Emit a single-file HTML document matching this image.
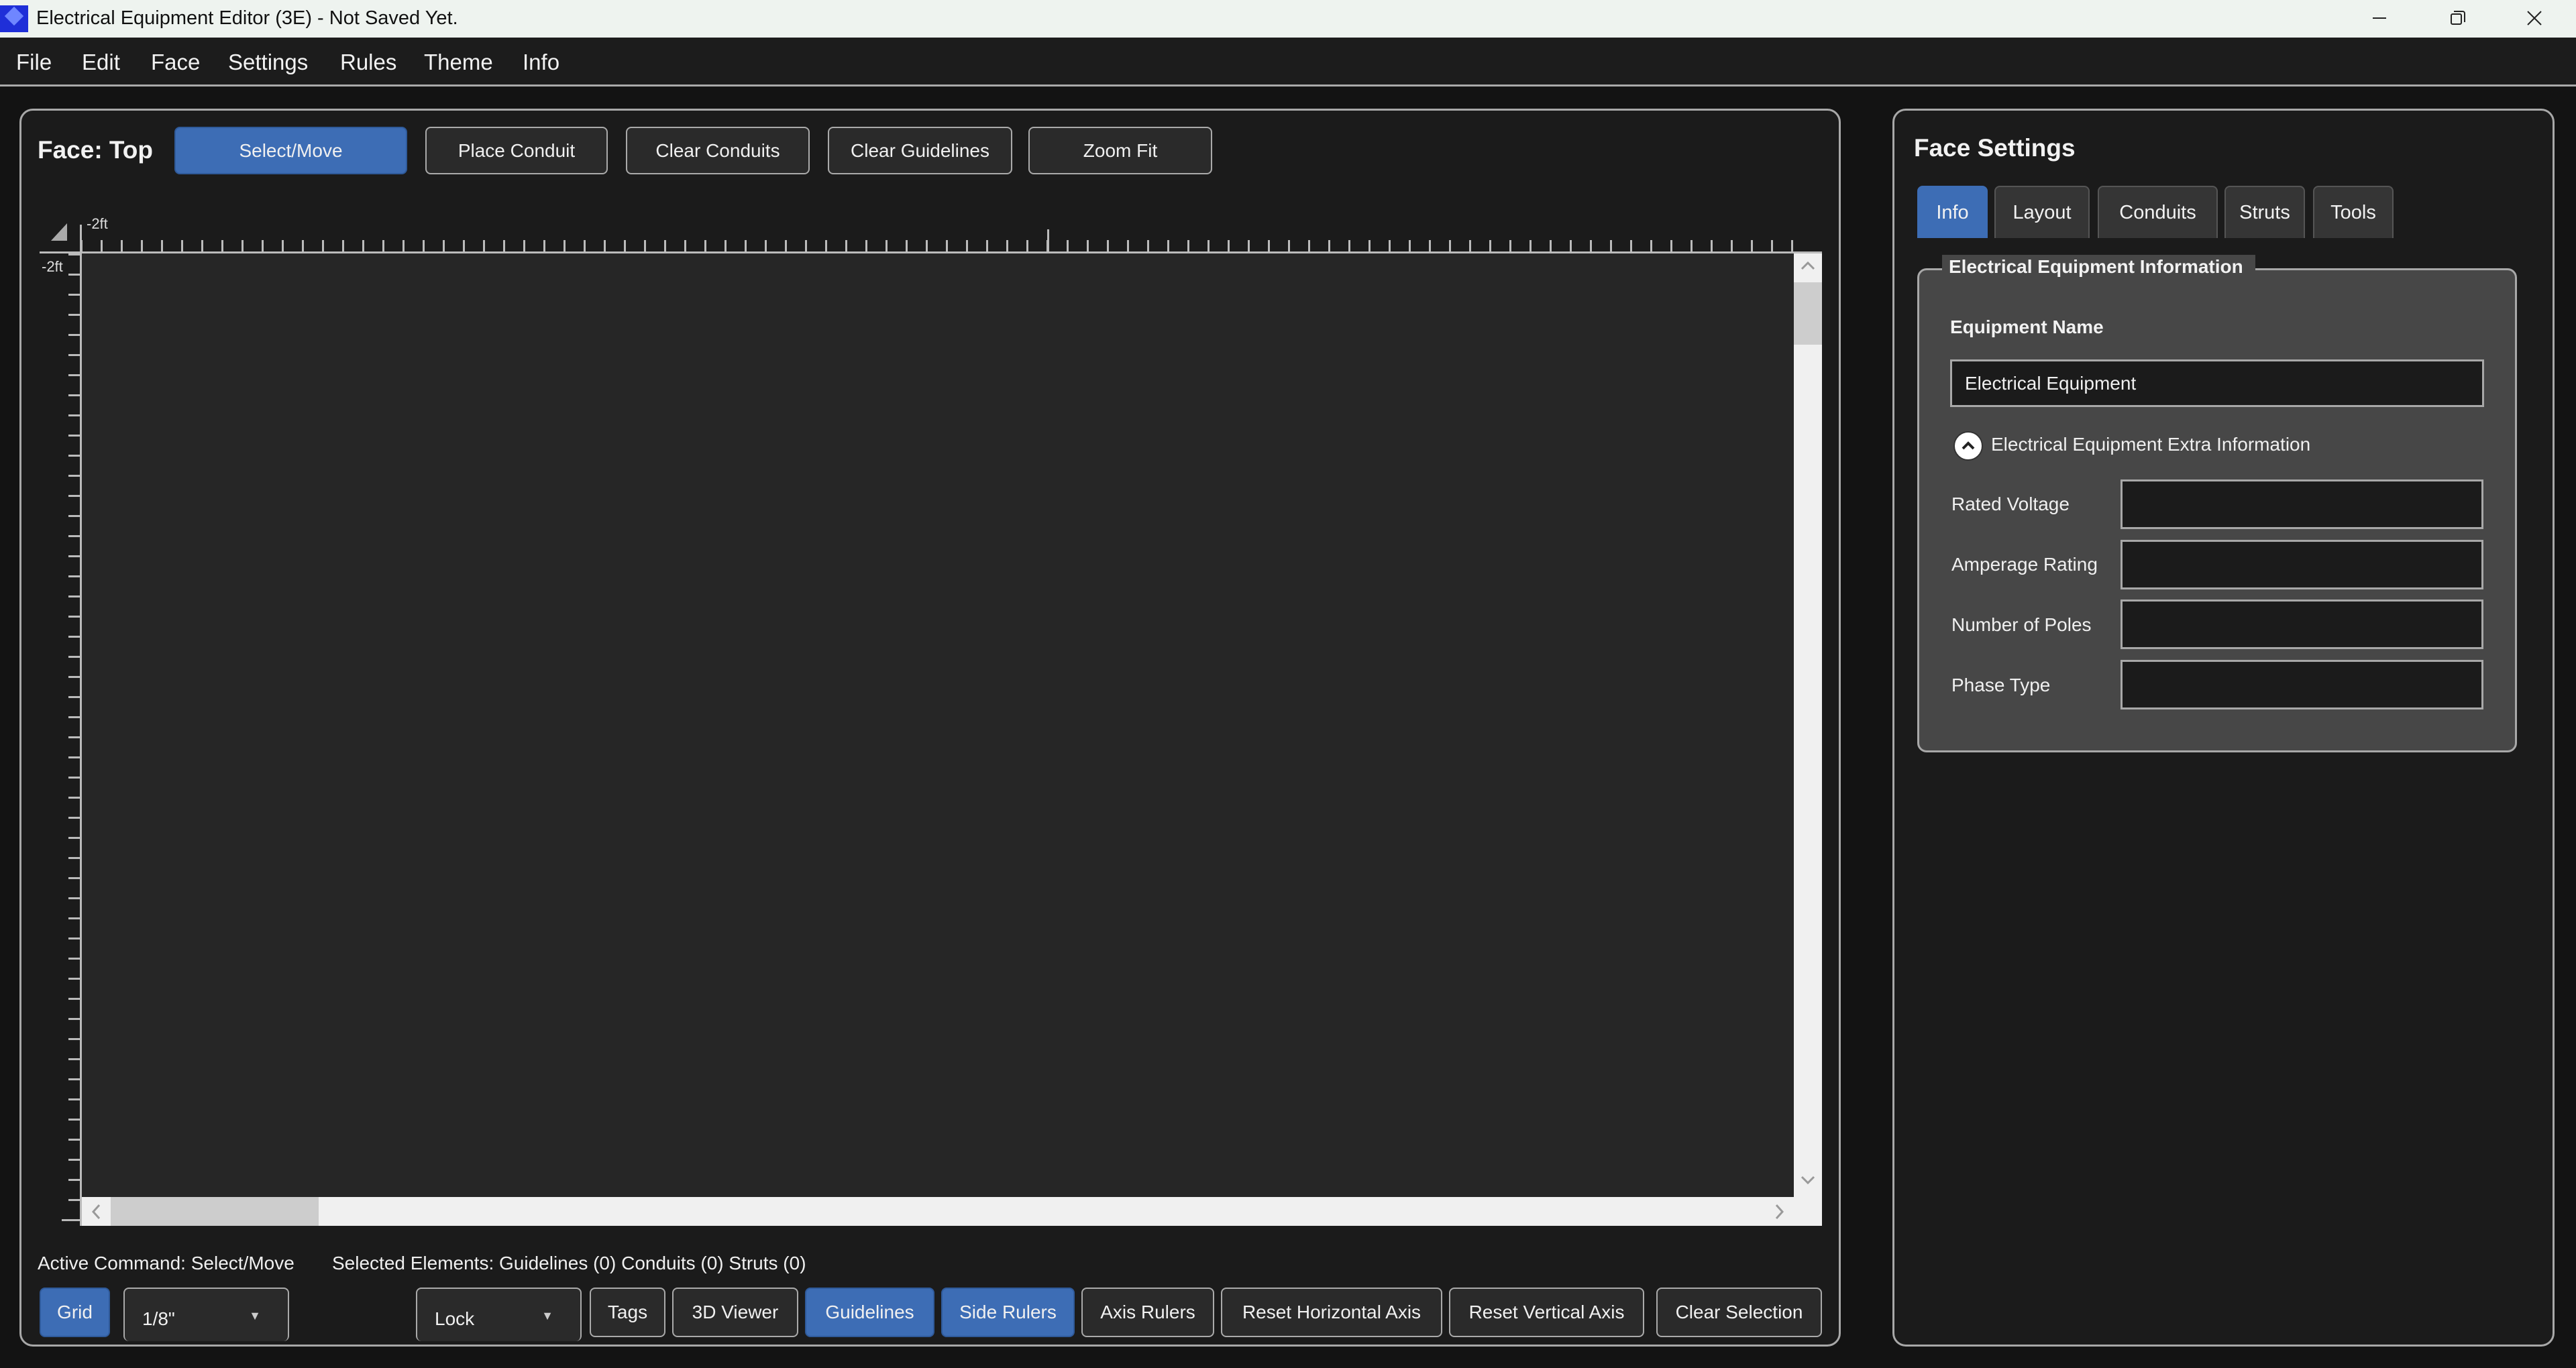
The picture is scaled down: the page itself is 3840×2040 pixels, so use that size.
<!DOCTYPE html>
<html><head><meta charset="utf-8"><style>
*{box-sizing:border-box;margin:0;padding:0}
body{width:3840px;height:2040px;background:#131313;font-family:"Liberation Sans",sans-serif;color:#f2f2f2;position:relative;overflow:hidden}
.a{position:absolute}
.btn{position:absolute;background:#2a2a2a;border:2px solid #aaa;border-radius:8px;color:#f0f0f0;font-size:28px;display:flex;align-items:center;justify-content:center;white-space:nowrap}
.blue{background:#3d6db5;border-color:#2f5a9a}
.tb{position:absolute;background:#1b1b1b;border:3px solid #a8a8a8}
.lbl{position:absolute;font-size:28px;color:#f0f0f0;white-space:nowrap}
.tab{position:absolute;top:277px;height:78px;background:#353535;border:2px solid #555;border-bottom:none;border-radius:8px 8px 0 0;font-size:29px;display:flex;align-items:center;justify-content:center}
</style></head><body>
<!-- title bar -->
<div class="a" style="left:0;top:0;width:3840px;height:56px;background:#eef3ef"></div>
<div class="a" style="left:0;top:8px;width:42px;height:40px;background:#1f2fd8"></div>
<div class="a" style="left:11px;top:14px;width:20px;height:20px;background:#6f86ff;transform:rotate(45deg)"></div>
<div class="a" style="left:54px;top:11px;font-size:29px;color:#111">Electrical Equipment Editor (3E) - Not Saved Yet.</div>
<div class="a" style="left:3537px;top:26px;width:20px;height:2px;background:#222"></div>
<div class="a" style="left:3653px;top:20px;width:17px;height:17px;border:2px solid #222;border-radius:3px"></div>
<div class="a" style="left:3658px;top:16px;width:17px;height:17px;border-top:2px solid #222;border-right:2px solid #222;border-radius:0 4px 0 0"></div>
<svg class="a" style="left:3767px;top:16px" width="22" height="22"><path d="M1 1L21 21M21 1L1 21" stroke="#222" stroke-width="2"/></svg>
<!-- menu -->
<div class="a" style="left:0;top:56px;width:3840px;height:73px;background:#1c1c1c;border-bottom:3px solid #aaa"></div>
<div class="a" style="top:74px;font-size:33px;left:24px">File</div>
<div class="a" style="top:74px;font-size:33px;left:122px">Edit</div>
<div class="a" style="top:74px;font-size:33px;left:225px">Face</div>
<div class="a" style="top:74px;font-size:33px;left:340px">Settings</div>
<div class="a" style="top:74px;font-size:33px;left:507px">Rules</div>
<div class="a" style="top:74px;font-size:33px;left:632px">Theme</div>
<div class="a" style="top:74px;font-size:33px;left:779px">Info</div>
<!-- left panel -->
<div class="a" style="left:29px;top:162px;width:2715px;height:1846px;background:#1b1b1b;border:3px solid #a8a8a8;border-radius:20px"></div>
<div class="a" style="left:56px;top:203px;font-size:37px;font-weight:bold">Face: Top</div>
<div class="btn blue" style="left:260px;top:189px;width:347px;height:71px">Select/Move</div>
<div class="btn" style="left:634px;top:189px;width:272px;height:71px">Place Conduit</div>
<div class="btn" style="left:933px;top:189px;width:274px;height:71px">Clear Conduits</div>
<div class="btn" style="left:1234px;top:189px;width:275px;height:71px">Clear Guidelines</div>
<div class="btn" style="left:1533px;top:189px;width:274px;height:71px">Zoom Fit</div>
<!-- rulers -->
<div class="a" style="left:120px;top:358px;width:2580px;height:19px;background:repeating-linear-gradient(90deg,#bbb 0 3px,transparent 3px 30px)"></div>
<div class="a" style="left:1561px;top:342px;width:3px;height:35px;background:#bbb"></div>
<div class="a" style="left:119px;top:335px;width:3px;height:1493px;background:#bbb"></div>
<div class="a" style="left:59px;top:375px;width:2657px;height:3px;background:#bbb"></div>
<div class="a" style="left:102px;top:378px;width:18px;height:1450px;background:repeating-linear-gradient(180deg,#bbb 0 3px,transparent 3px 30px)"></div>
<div class="a" style="left:92px;top:1818px;width:28px;height:3px;background:#bbb"></div>
<svg class="a" style="left:76px;top:333px" width="24" height="26"><path d="M24 0L24 26L0 26Z" fill="#aaa"/></svg>
<div class="a" style="left:129px;top:321px;font-size:22px;color:#ddd">-2ft</div>
<div class="a" style="left:62px;top:385px;font-size:22px;color:#ddd">-2ft</div>
<!-- canvas -->
<div class="a" style="left:122px;top:378px;width:2552px;height:1407px;background:#262626"></div>
<div class="a" style="left:2674px;top:378px;width:42px;height:1450px;background:#f0f0f0"></div>
<div class="a" style="left:2674px;top:421px;width:42px;height:93px;background:#cdcdcd"></div>
<svg class="a" style="left:2684px;top:388px" width="22" height="16"><path d="M2 13L11 4L20 13" stroke="#999" stroke-width="3" fill="none"/></svg>
<svg class="a" style="left:2684px;top:1752px" width="22" height="16"><path d="M2 3L11 12L20 3" stroke="#999" stroke-width="3" fill="none"/></svg>
<div class="a" style="left:122px;top:1785px;width:2552px;height:43px;background:#f0f0f0"></div>
<div class="a" style="left:165px;top:1785px;width:310px;height:43px;background:#cdcdcd"></div>
<svg class="a" style="left:135px;top:1795px" width="16" height="24"><path d="M13 2L4 12L13 22" stroke="#999" stroke-width="3" fill="none"/></svg>
<svg class="a" style="left:2645px;top:1795px" width="16" height="24"><path d="M3 2L12 12L3 22" stroke="#999" stroke-width="3" fill="none"/></svg>
<!-- status -->
<div class="lbl" style="left:56px;top:1868px">Active Command: Select/Move</div>
<div class="lbl" style="left:495px;top:1868px">Selected Elements: Guidelines (0) Conduits (0) Struts (0)</div>
<div class="btn blue" style="left:59px;top:1920px;width:105px;height:74px">Grid</div>
<div class="btn" style="left:184px;top:1920px;width:247px;height:80px;border-bottom:none;justify-content:flex-start;padding:12px 0 0 26px">1/8"<span style="position:absolute;right:40px;top:30px;font-size:18px;color:#ccc">▼</span></div>
<div class="btn" style="left:620px;top:1920px;width:247px;height:80px;border-bottom:none;justify-content:flex-start;padding:12px 0 0 26px">Lock<span style="position:absolute;right:40px;top:30px;font-size:18px;color:#ccc">▼</span></div>
<div class="btn" style="left:879px;top:1920px;width:113px;height:74px">Tags</div>
<div class="btn" style="left:1002px;top:1920px;width:188px;height:74px">3D Viewer</div>
<div class="btn blue" style="left:1200px;top:1920px;width:193px;height:74px">Guidelines</div>
<div class="btn blue" style="left:1403px;top:1920px;width:199px;height:74px">Side Rulers</div>
<div class="btn" style="left:1612px;top:1920px;width:198px;height:74px">Axis Rulers</div>
<div class="btn" style="left:1820px;top:1920px;width:330px;height:74px">Reset Horizontal Axis</div>
<div class="btn" style="left:2160px;top:1920px;width:291px;height:74px">Reset Vertical Axis</div>
<div class="btn" style="left:2469px;top:1920px;width:247px;height:74px">Clear Selection</div>
<!-- right panel -->
<div class="a" style="left:2821px;top:162px;width:987px;height:1846px;background:#1b1b1b;border:3px solid #a8a8a8;border-radius:20px"></div>
<div class="a" style="left:2853px;top:200px;font-size:37px;font-weight:bold">Face Settings</div>
<div class="tab" style="left:2858px;width:105px;background:#3d6db5;border-color:#3d6db5">Info</div>
<div class="tab" style="left:2973px;width:142px">Layout</div>
<div class="tab" style="left:3127px;width:179px">Conduits</div>
<div class="tab" style="left:3316px;width:120px">Struts</div>
<div class="tab" style="left:3448px;width:120px">Tools</div>
<div class="a" style="left:2858px;top:400px;width:894px;height:722px;background:#474747;border:3px solid #a8a8a8;border-radius:14px"></div>
<div class="a" style="left:2895px;top:380px;width:467px;height:38px;background:#474747"></div>
<div class="a" style="left:2905px;top:382px;font-size:28px;font-weight:bold">Electrical Equipment Information</div>
<div class="a" style="left:2907px;top:472px;font-size:28px;font-weight:bold">Equipment Name</div>
<div class="tb" style="left:2907px;top:536px;width:796px;height:71px"></div>
<div class="lbl" style="left:2929px;top:556px">Electrical Equipment</div>
<div class="a" style="left:2912px;top:643px;width:44px;height:44px;border-radius:50%;background:#fff;border:2px solid #333"></div>
<svg class="a" style="left:2923px;top:656px" width="22" height="16"><path d="M3 13L11 5L19 13" stroke="#222" stroke-width="4" fill="none"/></svg>
<div class="lbl" style="left:2968px;top:647px">Electrical Equipment Extra Information</div>
<div class="lbl" style="left:2909px;top:736px">Rated Voltage</div>
<div class="lbl" style="left:2909px;top:826px">Amperage Rating</div>
<div class="lbl" style="left:2909px;top:916px">Number of Poles</div>
<div class="lbl" style="left:2909px;top:1006px">Phase Type</div>
<div class="tb" style="left:3161px;top:715px;width:541px;height:74px"></div>
<div class="tb" style="left:3161px;top:805px;width:541px;height:74px"></div>
<div class="tb" style="left:3161px;top:894px;width:541px;height:74px"></div>
<div class="tb" style="left:3161px;top:984px;width:541px;height:74px"></div>
</body></html>
